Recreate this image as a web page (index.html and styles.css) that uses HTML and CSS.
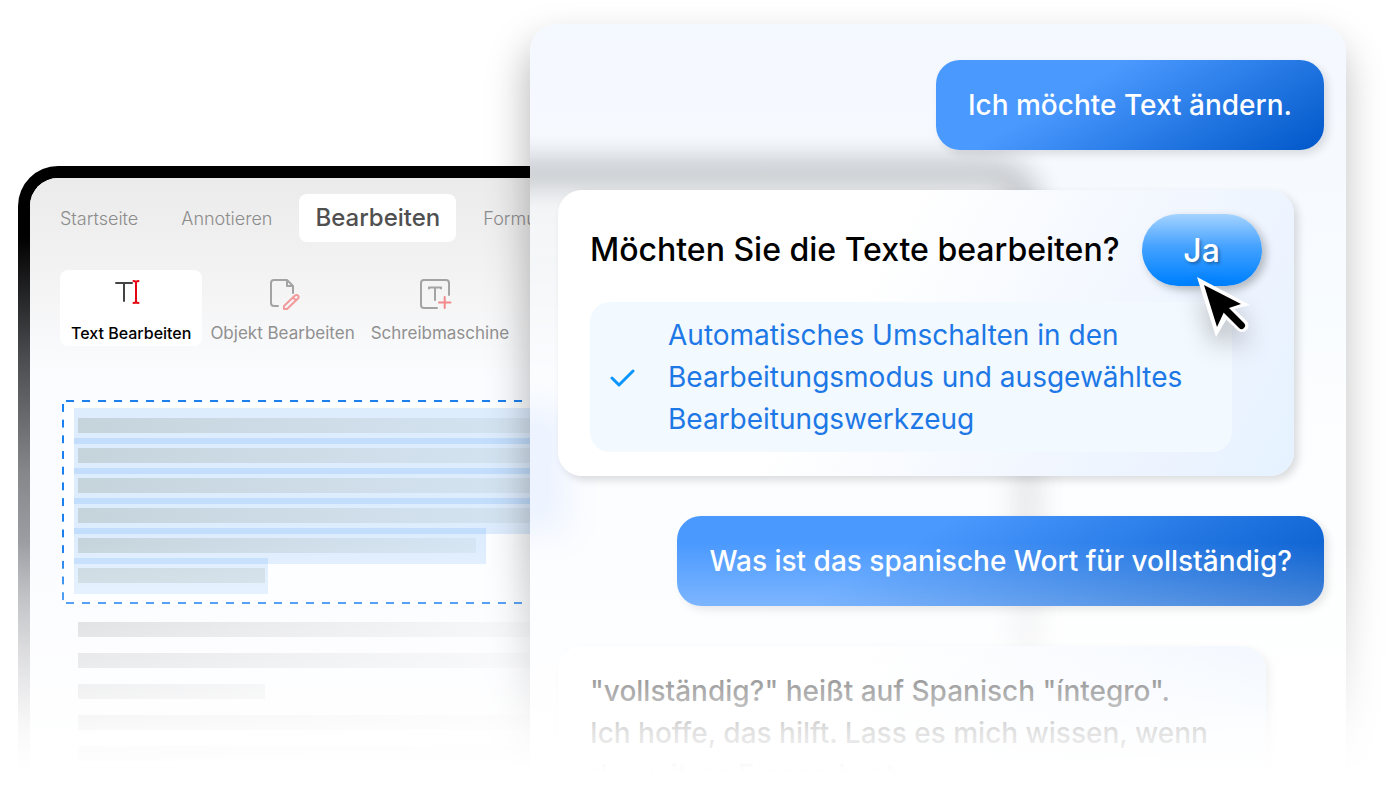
FILE: index.html
```html
<!DOCTYPE html>
<html lang="de">
<head>
    <meta charset="UTF-8">
    <meta name="viewport" content="width=device-width, initial-scale=1.0">
    <title>Text bearbeiten</title>
    <link rel="stylesheet" href="styles.css">
</head>
<body>
    <main class="scene">
        <section class="tablet">
            <div class="screen">
                <header class="toolbar">
                    <nav class="tabs">
                        <a href="#">Startseite</a>
                        <a href="#">Annotieren</a>
                        <a href="#" class="active">Bearbeiten</a>
                        <a href="#">Formular</a>
                    </nav>
                    <div class="tools">
                        <button class="tool active">
                            <svg width="32" height="32" viewBox="0 0 32 32" fill="none" stroke-width="2" stroke-linecap="round" stroke-linejoin="round">
                                <path d="M1 5H17M9 5V23" stroke="#444"/>
                                <path d="M18.500 3Q21 3 21 5Q21 3 23.500 3M18.500 25Q21 25 21 23Q21 25 23.500 25M21 5V23" stroke="#e30613"/>
                            </svg>
                            Text Bearbeiten
                        </button>
                        <button class="tool">
                            <svg width="32" height="32" viewBox="1 0 32 32" fill="none" stroke-width="2" stroke-linecap="round" stroke-linejoin="round">
                                <path d="M12 28H8a3 3 0 0 1-3-3V5a3 3 0 0 1 3-3H21L27 8V15M21 2V8H27" stroke="#a3a3a3"/>
                                <path d="M18 31V28L29 17.500a2 2 0 0 1 3 3L21 31Z M27 19.500L30 22.500" stroke="#f2999b"/>
                            </svg>
                            Objekt Bearbeiten
                        </button>
                        <button class="tool">
                            <svg width="32" height="32" viewBox="2 0 32 32" fill="none" stroke-width="2" stroke-linecap="round" stroke-linejoin="round">
                                <path d="M15 30H2a3 3 0 0 1-3-3V5a3 3 0 0 1 3-3H24a3 3 0 0 1 3 3V17" stroke="#a3a3a3"/>
                                <path d="M7 10.500V9.500H19V10.500M13 9.500V22" stroke="#a3a3a3"/>
                                <path d="M17 24.500H28.500M22.700 19V30" stroke="#f2898b"/>
                            </svg>
                            Schreibmaschine
                        </button>
                    </div>
                </header>
                <div class="page">
                    <div class="selection">
                        <div class="marked"><span class="bar"></span></div>
                        <div class="marked"><span class="bar"></span></div>
                        <div class="marked"><span class="bar"></span></div>
                        <div class="marked"><span class="bar"></span></div>
                        <div class="marked medium"><span class="bar"></span></div>
                        <div class="marked short"><span class="bar"></span></div>
                    </div>
                    <div class="lines">
                        <span class="bar"></span>
                        <span class="bar"></span>
                        <span class="bar short"></span>
                        <span class="bar"></span>
                        <span class="bar"></span>
                    </div>
                </div>
            </div>
        </section>

        <section class="chat">
            <p class="message user">Ich möchte Text ändern.</p>

            <div class="message bot">
                <div class="question">
                    <h2>Möchten Sie die Texte bearbeiten?</h2>
                    <div class="answer">
                        <button class="yes">Ja</button>
                        <svg class="cursor" width="70" height="80" viewBox="0 0 70 80">
                            <path d="M7 7L60 35L44 39L36 50L26 67Z" fill="#fff"/>
                            <path d="M38 42L52 55.500" stroke="#fff" stroke-width="13" stroke-linecap="round"/>
                            <path d="M14 15L51 34L39 38L34 42L27 57Z" fill="#000"/>
                            <path d="M34 38L51.500 55.500" stroke="#000" stroke-width="7" stroke-linecap="round"/>
                        </svg>
                    </div>
                </div>
                <div class="hint">
                    <svg width="26" height="20" viewBox="0 0 26 20" fill="none">
                        <path d="M2 11L9 18L23 4" stroke="#0a95ff" stroke-width="3" stroke-linecap="round" stroke-linejoin="round"/>
                    </svg>
                    <p>Automatisches Umschalten in den Bearbeitungsmodus und ausgewähltes Bearbeitungswerkzeug</p>
                </div>
            </div>

            <p class="message user">Was ist das spanische Wort für vollständig?</p>

            <div class="message bot last">
                <p>"vollständig?" heißt auf Spanisch "íntegro".<br>Ich hoffe, das hilft. Lass es mich wissen, wenn<br>du weitere Fragen hast.</p>
            </div>
        </section>
    </main>
</body>
</html>
```

FILE: styles.css
```css
* {
    margin: 0;
    padding: 0;
    box-sizing: border-box;
}
body {
    background: #fff;
    font-family: 'Inter', 'Liberation Sans', sans-serif;
}
button {
    border: none;
    background: none;
    font-family: inherit;
    cursor: pointer;
}
a {
    text-decoration: none;
}

/* tablet and chat share the middle column, the chat lies on top */
.scene {
    position: relative;
    display: grid;
    grid-template-columns: 18px minmax(0, 512fr) minmax(0, 504fr) minmax(0, 312fr) 54px;
    grid-template-rows: 24px 142px 1fr;
    overflow: hidden;
}
.scene::after {
    content: '';
    position: absolute;
    left: 0;
    right: 0;
    bottom: 0;
    height: 230px;
    background: linear-gradient(rgba(255, 255, 255, 0), rgba(255, 255, 255, 0.27) 27%, rgba(255, 255, 255, 0.66) 64%, rgba(255, 255, 255, 0.88) 82%, #fff);
    pointer-events: none;
}

/* tablet */
.tablet {
    grid-column: 2 / 4;
    grid-row: 3;
    display: flex;
    padding: 12px 12px 0;
    border-radius: 40px 40px 0 0;
    background: linear-gradient(#000 70px, #4a4b4f 190px, #87888c 310px, #aeafb4 430px, #d8d8dc);
    overflow: hidden;
}
.screen {
    flex: 1;
    min-width: 0;
    border-radius: 28px 28px 0 0;
    background: #fbfcff;
    overflow: hidden;
}
.toolbar {
    height: 200px;
    padding: 16px 30px;
    background: linear-gradient(#ebebeb, #f3f3f3 50%, #fbfcff);
}
.tabs {
    display: flex;
    align-items: center;
    gap: 43px;
    height: 48px;
    font-size: 18px;
    font-weight: 300;
}
.tabs a {
    color: #8c8c8c;
}
.tabs a.active {
    margin: 0 -16px;
    padding: 0 16px;
    border-radius: 8px;
    background: #fff;
    color: #505050;
    font-size: 24px;
    font-weight: 500;
    line-height: 48px;
}
.tools {
    display: flex;
    margin-top: 28px;
}
.tool {
    display: flex;
    flex-direction: column;
    align-items: center;
    gap: 13px;
    height: 76px;
    padding: 8px 8px 3px;
    border-radius: 8px;
    color: #909090;
    font-size: 17px;
    line-height: 20px;
}
.tool.active {
    padding: 8px 11px 3px;
    background: #fff;
    color: #000;
    font-size: 16px;
    font-weight: 500;
}
.tool svg {
    flex: none;
    overflow: visible;
}
.page {
    width: 580px;
    padding: 22px 32px 0;
}

/* dashed frame, drawn as tiled strips */
.selection {
    height: 204px;
    padding: 8px 12px;
    background:
        linear-gradient(90deg, #1a7fef 50%, transparent 50%) 4px 0 / 16px 2px repeat-x,
        linear-gradient(90deg, #1a7fef 50%, transparent 50%) 4px 100% / 16px 2px repeat-x,
        linear-gradient(#1a7fef 50%, transparent 50%) 0 4px / 2px 16px no-repeat round,
        #fdfeff;
}
.marked {
    height: 36px;
    padding: 10px 0 0 4px;
    background: rgba(0, 112, 250, 0.12);
}
.marked + .marked {
    margin-top: -6px;
}
.marked.medium {
    width: 412px;
    padding-right: 10px;
}
.marked.short {
    width: 194px;
    padding-right: 3px;
}
.bar {
    display: block;
    height: 15px;
    background: linear-gradient(90deg, rgba(86, 100, 64, 0.18), rgba(86, 100, 80, 0.06));
}
.marked.short .bar {
    background: linear-gradient(90deg, rgba(86, 100, 64, 0.16), rgba(86, 100, 64, 0.12));
}
.lines {
    display: flex;
    flex-direction: column;
    gap: 16px;
    padding: 18px 16px 0;
}
.lines .bar {
    background: linear-gradient(90deg, rgba(0, 0, 0, 0.16), rgba(0, 0, 0, 0.02));
}
.lines .bar.short {
    width: 187px;
    background: linear-gradient(90deg, rgba(0, 0, 0, 0.14), rgba(0, 0, 0, 0.08));
}

/* chat */
.chat {
    position: relative;
    z-index: 0;
    grid-column: 3 / 5;
    grid-row: 2 / 4;
    display: flex;
    flex-direction: column;
    gap: 40px;
    padding: 36px 22px 0 28px;
    border-radius: 28px 28px 0 0;
    background: linear-gradient(#f4f8ff, #f7fbff 200px, #fdfeff 460px, #fff);
    box-shadow: -3px 20px 40px rgba(0, 0, 0, 0.28);
    overflow: hidden;
}
/* the tablet shining through the frosted panel */
.chat::before {
    content: '';
    position: absolute;
    z-index: -1;
    top: 142px;
    right: 38.235%;
    bottom: -60px;
    left: -60px;
    border: 12px solid transparent;
    border-left: none;
    border-radius: 0 40px 0 0;
    background:
        linear-gradient(#dbe8ff, #dbe8ff) 0 230px / 98px 126px no-repeat padding-box,
        linear-gradient(#ebebeb, #f3f3f3 100px, #fbfcff 200px) padding-box,
        linear-gradient(#000 70px, #4a4b4f 190px, #87888c 310px, #aeafb4 430px, #d8d8dc) border-box;
    filter: blur(15px);
    opacity: 0.45;
}
.message {
    font-size: 28px;
    line-height: 42px;
}
.user {
    align-self: flex-end;
    padding: 24px 32px;
    border-radius: 24px;
    background: linear-gradient(150deg, #4a99ff 35%, #0057c8);
    box-shadow: 4px 4px 8px rgba(0, 0, 0, 0.12);
    color: #fff;
    font-weight: 500;
}
.bot {
    align-self: flex-start;
    padding: 24px 32px;
    border-radius: 24px;
    background: linear-gradient(120deg, #fff 40%, #f4f8ff 65%, #ebf3ff 88%, #e5f2ff);
    box-shadow: 4px 4px 8px rgba(0, 0, 0, 0.14);
}
.question {
    display: flex;
    align-items: center;
    gap: 22px;
}
.question h2 {
    font-size: 32px;
    font-weight: 500;
}
.answer {
    position: relative;
}
.yes {
    width: 120px;
    height: 72px;
    border-radius: 36px;
    background: linear-gradient(#a5d3ff, #45a2ff 45%, #0082ff 95%);
    box-shadow: 4px 4px 8px rgba(0, 0, 0, 0.25);
    color: #fff;
    font-size: 32px;
    font-weight: 500;
    text-shadow: 2px 2px 3px rgba(0, 0, 0, 0.3);
}
.cursor {
    position: absolute;
    left: 48px;
    top: 56px;
    overflow: visible;
    filter: drop-shadow(0 14px 12px rgba(0, 0, 0, 0.22));
}
.hint {
    display: flex;
    align-items: center;
    gap: 32px;
    margin: 16px 30px 0 0;
    padding: 12px 20px;
    border-radius: 20px;
    background: #f2f9ff;
    color: #1d78e6;
}
.hint svg {
    flex: none;
}
.hint p {
    width: 520px;
}
.last {
    width: 708px;
    height: 126px;
    border-radius: 24px 24px 0 0;
    font-weight: 500;
    overflow: hidden;
}
```
